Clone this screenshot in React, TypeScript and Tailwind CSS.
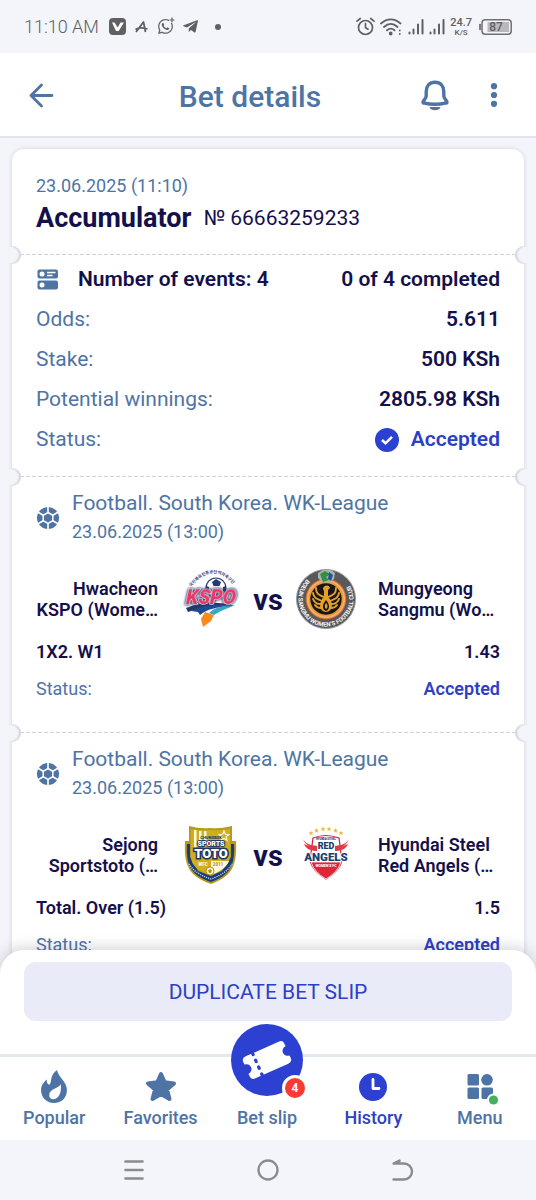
import type { ReactNode } from "react";
import { FaTelegramPlane, FaWhatsapp } from "react-icons/fa";

const spokes = [30, 90, 150, 210, 270, 330];

function SignalIcon() {
  return (
    <svg className="h-[18px] w-4" viewBox="0 0 16 18" fill="none" stroke="#606064" strokeWidth="2" strokeLinecap="round" aria-hidden="true">
      <path d="M1.5 15.500V14.500M5.500 15.500V11.500M10 15.500V6.500M14.500 15.500V2" />
    </svg>
  );
}

function StatusBar() {
  return (
    <div className="flex h-[53px] shrink-0 items-center justify-between bg-[#f4f5fa] px-6 text-[#606064]">
      <div className="flex items-center">
        <span className="mr-2.5 text-[18px] font-light">11:10 AM</span>
        <svg className="mr-[9px] h-[17px] w-[17px]" viewBox="0 0 17 17" aria-hidden="true">
          <rect width="17" height="17" rx="4" fill="#606064" />
          <path d="M3 4.500h2.500l3.200 5 2.800-5H15L9.700 13H7z" fill="#fff" />
        </svg>
        <svg className="mr-[9px] h-3.5 w-[13px]" viewBox="0 0 13 14" fill="none" stroke="#606064" strokeWidth="1.800" strokeLinejoin="round" aria-hidden="true">
          <path d="M1 12 8.500 2l2 10M.5 9.500C4 7 9 8 12.500 9" />
        </svg>
        <span className="relative mr-2 flex">
          <FaWhatsapp size={17} aria-hidden="true" />
          <svg className="absolute -right-px -top-px h-1.5 w-1.5" viewBox="0 0 6 6" aria-hidden="true">
            <rect width="6" height="6" fill="#f4f5fa" />
            <path d="M3 .5v5M.5 3h5" stroke="#606064" strokeWidth="1.200" />
          </svg>
        </span>
        <FaTelegramPlane size={17} aria-hidden="true" />
        <span className="ml-4 h-1.5 w-1.5 rounded-full bg-[#606064]" />
      </div>
      <div className="flex items-center">
        <svg className="mr-[5px] h-[19px] w-[19px]" viewBox="0 0 19 19" fill="none" stroke="#606064" strokeWidth="1.700" strokeLinecap="round" aria-hidden="true">
          <circle cx="9.500" cy="10.500" r="7" />
          <path d="M9.500 6.500v4.200l2.600 1.500M1 4.200 4.300 1.500M18 4.200l-3.300-2.700" />
        </svg>
        <svg className="mr-1.5 h-[19px] w-[22px]" viewBox="0 0 22 19" fill="none" stroke="#606064" strokeWidth="1.800" strokeLinecap="round" aria-hidden="true">
          <path d="M1 6.500C7 1 14.500 1 20.500 6.500M4 10C8.200 6 13.300 6 17.500 10M7 13.300c2.500-2.200 5-2.200 7.500 0" />
          <circle cx="10.700" cy="16.500" r="1" fill="#606064" />
          <path d="M19.800 13.500v.1M19.800 17v.1" />
        </svg>
        <SignalIcon />
        <span className="w-[5px]" />
        <SignalIcon />
        <span className="ml-[5px] flex flex-col items-center text-[11px] font-medium leading-[11px]">
          <span>24.7</span>
          <span className="text-[8px] leading-[9px]">K/S</span>
        </span>
        <svg className="ml-[7px] h-4 w-[33px]" viewBox="0 0 33 16" aria-hidden="true">
          <path d="M1 5.500v5" stroke="#606064" strokeWidth="1.600" strokeLinecap="round" />
          <rect x="3" y=".8" width="29.200" height="14.400" rx="3.200" fill="none" stroke="#707074" strokeWidth="1.500" />
          <path d="M8.500 3H30v10H8.500z" fill="#b9b9bd" />
          <text x="17" y="12.200" textAnchor="middle" fontSize="12" fontWeight="500" fill="#606064">87</text>
        </svg>
      </div>
    </div>
  );
}

function Header() {
  return (
    <header className="relative z-10 grid h-[85px] shrink-0 grid-cols-[84px_1fr_120px] items-center border-b-2 border-[#e0e4ed] bg-white px-[26px] text-[#4e74a5]">
      <button type="button" aria-label="Back" className="flex w-8">
        <svg className="h-8 w-8" viewBox="0 0 32 32" fill="none" stroke="currentColor" strokeWidth="2.800" strokeLinecap="round" strokeLinejoin="round">
          <path d="M26 16.500H5M15.500 6 5 16.500 15.500 27" />
        </svg>
      </button>
      <h1 className="pt-1 text-center text-[30px] font-medium">Bet details</h1>
      <div className="flex items-center justify-end gap-[27px]">
        <button type="button" aria-label="Notifications">
          <svg className="h-8 w-8" viewBox="0 0 32 32" fill="none">
            <path d="M16 3.200c-5.600 0-8.800 4-8.800 9.200v4.500c0 3-3.200 4.300-3.200 6 0 .8.700 1.200 1.700 1.200C9 25 12 25.300 16 25.300s7-.3 10.300-1.200c1 0 1.700-.4 1.700-1.200 0-1.700-3.200-3-3.200-6v-4.500c0-5.200-3.200-9.200-8.800-9.200z" stroke="currentColor" strokeWidth="3.400" />
            <path d="M10.500 28h11c-.7 2.200-2.800 3.300-5.500 3.300s-4.800-1.100-5.500-3.300z" fill="currentColor" />
          </svg>
        </button>
        <button type="button" aria-label="More options" className="flex w-8 justify-center">
          <svg className="h-6 w-2" viewBox="0 0 8 24" fill="currentColor">
            <circle cx="4" cy="3.200" r="3.100" />
            <circle cx="4" cy="12" r="3.100" />
            <circle cx="4" cy="20.800" r="3.100" />
          </svg>
        </button>
      </div>
    </header>
  );
}

function Perforation() {
  return (
    <>
      <div className="mx-2 h-px bg-[repeating-linear-gradient(90deg,#d2d3d8_0_4px,transparent_4px_6px)]" />
      <span className="absolute -left-[3px] -top-2 h-[18px] w-3 rounded-r-full bg-[#f4f5fa] shadow-[inset_-2px_0_2px_#d3d4da]" />
      <span className="absolute -right-[3px] -top-2 h-[18px] w-3 rounded-l-full bg-[#f4f5fa] shadow-[inset_2px_0_2px_#d3d4da]" />
    </>
  );
}

function BallIcon() {
  return (
    <svg className="h-6 w-6 shrink-0" viewBox="-12 -12 24 24" aria-hidden="true">
      <circle r="11" fill="#4e74a5" />
      <path d="M0-5.500 4.800-2.700V2.700L0 5.500-4.800 2.700V-2.700z" fill="#4e74a5" stroke="#fff" strokeWidth="1.500" />
      {spokes.map((a) => (
        <path key={a} transform={`rotate(${a})`} d="M5 0H12" stroke="#fff" strokeWidth="1.600" />
      ))}
    </svg>
  );
}

function KspoLogo() {
  return (
    <svg className="h-[60px] w-[60px]" viewBox="0 0 60 60" role="img" aria-label="Hwacheon KSPO">
      <defs>
        <path id="kspo-arc" d="M11 18Q34-10 56 19" />
      </defs>
      <text fontSize="4.200" fontWeight="700" fill="#33427c" className="font-[Noto_Sans_CJK_KR,sans-serif]">
        <textPath href="#kspo-arc">국민체육진흥공단여자축구단</textPath>
      </text>
      <circle cx="36" cy="19" r="10" fill="#fff" stroke="#26386f" strokeWidth="1.200" />
      <path d="M32 13l4-3 5 3-1.500 4h-6zM26 17l3 1v5h-3zM46 17l-3 1v5h3z" fill="#26386f" />
      <path d="M6 39C20 33 38 32 55 37 39 35 20 39 8 43z" fill="#26386f" />
      <path d="M11 42C24 36 37 35 51 37 37 38 27 40 20 46L18 43z" fill="#1f4c91" />
      <path d="M29 44C34 39 43 36 53 37L41 42 34 46z" fill="#36a8c8" />
      <path d="M25 43 34 46 31 52 23 58 21 50z" fill="#fa8a1c" />
      <g transform="translate(5 35) skewX(-12)">
        <text fontSize="19" fontWeight="900" fill="#ec3564" stroke="#fff" strokeWidth="1.200" paintOrder="stroke" className="font-[Roboto,sans-serif] [filter:drop-shadow(0_0_1px_#26386f)_drop-shadow(0_0_1px_#26386f)]">KSPO</text>
      </g>
    </svg>
  );
}

function SangmuLogo() {
  return (
    <svg className="h-[60px] w-[60px]" viewBox="0 0 60 60" role="img" aria-label="Mungyeong Sangmu">
      <defs>
        <path id="sangmu-ring" d="M14.200 7.500A27.500 27.500 0 1 0 45.800 7.500" />
        <radialGradient id="sangmu-glow">
          <stop offset=".72" stopColor="#ec7c28" />
          <stop offset=".88" stopColor="#f6b576" />
          <stop offset="1" stopColor="#893a22" />
        </radialGradient>
      </defs>
      <circle cx="30" cy="30" r="29.500" fill="#59595c" stroke="#9a9a9c" />
      <circle cx="30" cy="30" r="21" fill="url(#sangmu-glow)" />
      <circle cx="30" cy="30" r="17" fill="#e5a02b" />
      <circle cx="30" cy="30" r="15.700" fill="#191615" />
      <g fill="none" stroke="#e5a02b" strokeWidth="1.900" strokeLinecap="round">
        <path d="M20 19c0 7 4 7 8 9M17 24c1 6 5 6 9 8M17 30c2 5 5 5 8 5M19 36c2 3 4 3 6 3M40 19c0 7-4 7-8 9M43 24c-1 6-5 6-9 8M43 30c-2 5-5 5-8 5M41 36c-2 3-4 3-6 3" />
      </g>
      <path d="M27 20c0-4 6-5 7-1l-2 2v7c6 5 5 15-2 15s-8-10-2-15v-6z" fill="#e5a02b" />
      <path d="M30 31c-5 6-3 10 0 11 4-2 4-6 0-11z" fill="#191615" />
      <path d="M30 34c-2 3-1 5 0 6 2-1 2-4 0-6z" fill="#e5a02b" />
      <path d="M22 4 27 1h8l4 3-1 6-5 4-7-1-4-4z" fill="#a9b3af" />
      <path d="m24 5 5-3 5 3-4 3 3 3-6 2z" fill="#31913c" />
      <path d="m33 3 4 3-2 6-3-2z" fill="#285199" />
      <text fill="#f4f4f2" fontSize="6" fontWeight="700" className="font-[Roboto,sans-serif]">
        <textPath href="#sangmu-ring" startOffset="4">BOEUN SANGMU WOMEN’S FOOTBALL CLUB</textPath>
      </text>
    </svg>
  );
}

function TotoLogo() {
  return (
    <svg className="h-[60px] w-[60px]" viewBox="0 0 60 60" role="img" aria-label="Sejong Sportstoto">
      <path d="M9 1Q20 4 30 3 40 4 52 1V16H56C57 40 53 51 31 59 8 51 4 40 5 16H9z" fill="#b79a1c" />
      <path d="M7 19C6 41 11 50 31 57 50 50 55 41 54 19H51V32L42 46 31 51 18 46 10 32V19z" fill="#183b79" />
      <path d="M11 4Q22 6 31 5 39 6 50 4V31C49 41 42 46 31 50 18 46 11 41 11 31z" fill="#d0ae1c" />
      <path d="M14 5h2.500v18H14zm5 1h2.500v16H19zm5 0h2.500v14H24zM31 36H49C46 43 39 47 31 50z" fill="#fff8df" />
      <path d="m44 6 1.300 3.300 3.500.3-2.700 2.200.9 3.500-3-1.900-3 1.900.9-3.500-2.700-2.200 3.500-.3z" fill="none" stroke="#fff8df" strokeWidth="1.200" />
      <circle cx="30" cy="46" r="4" fill="#fff8df" stroke="#b98f11" />
      <path d="m30 44 2 1.500-1 2.500h-2l-1-2.500z" fill="#b98f11" />
      <path d="M9 39Q15 49 31 54 46 49 52 39" fill="none" stroke="#b9c8e6" strokeWidth="1.500" strokeDasharray="1.200 1" />
      <g textAnchor="middle" fontWeight="900" className="font-[Roboto,sans-serif]">
        <text x="31" y="13.500" fontSize="4" fill="#28436a">CHUNGBUK</text>
        <text x="31" y="21" fontSize="7" fill="#fff" stroke="#263d62" strokeWidth="2" paintOrder="stroke">SPORTS</text>
        <text x="31" y="33" fontSize="13" fill="#fff" stroke="#20365e" strokeWidth="3.200" paintOrder="stroke">TOTO</text>
        <text x="23" y="40.500" fontSize="4.500" fill="#fff8df">WFC</text>
        <text x="38" y="40.500" fontSize="4.500" fill="#bd9816">2011</text>
      </g>
    </svg>
  );
}

function AngelsLogo() {
  return (
    <svg className="h-[60px] w-[60px]" viewBox="0 0 60 60" role="img" aria-label="Hyundai Steel Red Angels">
      <g fill="#e8b84c">
        {[[15, 8], [20.5, 5.500], [27, 4], [33, 4], [39.500, 5.500], [45, 8]].map(([x, y]) => (
          <path key={x} transform={`translate(${x} ${y})`} d="m0-2.500.7 1.700 1.800.1-1.400 1.200.5 1.800L0 1.300l-1.600 1 .5-1.800L-2.500-.7l1.800-.1z" />
        ))}
      </g>
      <path d="M17 13Q30 8 43 13L46 36Q43 46 30 54 17 46 14 36z" fill="#fff" stroke="#cb2037" strokeWidth="1.200" />
      <path d="M15 37H45Q42 47 30 54 18 47 15 37z" fill="#df2538" stroke="#fff" strokeWidth=".8" />
      <path d="M7 14c3 5 7 6 14 7v5c-6 0-11-2-13-7l5 2c-3-2-5-4-6-7zM53 14c-3 5-7 6-14 7v5c6 0 11-2 13-7l-5 2c3-2 5-4 6-7z" fill="#e13a48" />
      <g textAnchor="middle" fontWeight="900" className="font-[Roboto,sans-serif]">
        <text x="30" y="15" fontSize="2.700" fill="#26446d">HYUNDAI STEEL</text>
        <text x="30" y="24" fontSize="9" fill="#183f70" stroke="#fff" strokeWidth="1.500" paintOrder="stroke">RED</text>
        <text x="30" y="35.500" fontSize="11.500" fill="#183f70" stroke="#fff" strokeWidth="1.800" paintOrder="stroke">ANGELS</text>
        <text x="30" y="42" fontSize="3.500" fill="#fff">WOMEN’S FC</text>
      </g>
    </svg>
  );
}

type EventProps = {
  home: [string, string];
  away: [string, string];
  homeLogo: ReactNode;
  awayLogo: ReactNode;
  market: string;
  odds: string;
};

function EventSection({ home, away, homeLogo, awayLogo, market, odds }: EventProps) {
  return (
    <section className="relative">
      <Perforation />
      <div className="px-6 pb-[26px] pt-3">
        <div className="flex items-center gap-3 text-[#4e74a5]">
          <BallIcon />
          <div>
            <h2 className="text-[21px] leading-7">Football. South Korea. WK-League</h2>
            <p className="text-[18px] leading-[30px]">23.06.2025 (13:00)</p>
          </div>
        </div>
        <div className="mt-[19px] grid h-[66px] grid-cols-[1fr_auto_1fr] items-center gap-[22px] text-[18px] font-semibold leading-[21px] text-[#14104c]">
          <p className="text-right">{home[0]}<br />{home[1]}</p>
          <div className="flex items-center">
            {homeLogo}
            <span className="w-14 pt-0.5 text-center text-[29px] font-bold leading-8">vs</span>
            {awayLogo}
          </div>
          <p>{away[0]}<br />{away[1]}</p>
        </div>
        <div className="flex h-[38px] items-center justify-between text-[18px] font-semibold text-[#14104c]">
          <span>{market}</span>
          <span>{odds}</span>
        </div>
        <div className="flex h-9 items-center justify-between text-[18px]">
          <span className="text-[#4e74a5]">Status:</span>
          <span className="font-semibold text-[#2d3fc4]">Accepted</span>
        </div>
      </div>
    </section>
  );
}

const summary = [
  ["Odds:", "5.611"],
  ["Stake:", "500 KSh"],
  ["Potential winnings:", "2805.98 KSh"],
];

function Slip() {
  return (
    <article className="mx-3 mt-[11px] rounded-xl bg-white shadow-[0_0_4px_#cfd1da]">
      <section className="px-6 pb-[18px] pt-6">
        <p className="text-[18px] leading-[26px] text-[#4e74a5]">23.06.2025 (11:10)</p>
        <div className="flex items-center gap-3 pt-px leading-9 text-[#14104c]">
          <strong className="text-[27px] font-bold">Accumulator</strong>
          <span className="text-[21px]">№ 66663259233</span>
        </div>
      </section>
      <section className="relative">
        <Perforation />
        <div className="px-6 pb-4 pt-[5px] text-[21px]">
          <div className="flex h-10 items-center font-semibold text-[#14104c]">
            <svg className="mr-[18px] h-6 w-6" viewBox="0 0 24 24" aria-hidden="true">
              <rect x="1.500" y="1.500" width="20.500" height="9" rx="2" fill="#4e74a5" />
              <rect x="1.500" y="12.500" width="20.500" height="9" rx="2" fill="#4e74a5" />
              <circle cx="6" cy="6" r="2.500" fill="#fff" />
              <circle cx="6" cy="17" r="2.500" fill="#fff" />
              <path d="M11 4.500h8.500M11 7.500h5.500" stroke="#fff" strokeWidth="1.300" />
            </svg>
            <span>Number of events: 4</span>
            <span className="ml-auto">0 of 4 completed</span>
          </div>
          {summary.map(([label, value]) => (
            <div key={label} className="flex h-10 items-center justify-between">
              <span className="text-[#4e74a5]">{label}</span>
              <span className="font-semibold text-[#14104c]">{value}</span>
            </div>
          ))}
          <div className="flex h-10 items-center">
            <span className="text-[#4e74a5]">Status:</span>
            <svg className="ml-auto mr-3 h-6 w-6" viewBox="0 0 24 24" aria-hidden="true">
              <circle cx="12" cy="12" r="12" fill="#2c40d2" />
              <path d="m7 12 3.500 3.300L17 8.800" fill="none" stroke="#fff" strokeWidth="2.600" />
            </svg>
            <span className="font-semibold text-[#2d3fc4]">Accepted</span>
          </div>
        </div>
      </section>
      <EventSection home={["Hwacheon", "KSPO (Wome…"]} away={["Mungyeong", "Sangmu (Wo…"]} homeLogo={<KspoLogo />} awayLogo={<SangmuLogo />} market="1X2. W1" odds="1.43" />
      <EventSection home={["Sejong", "Sportstoto (…"]} away={["Hyundai Steel", "Red Angels (…"]} homeLogo={<TotoLogo />} awayLogo={<AngelsLogo />} market="Total. Over (1.5)" odds="1.5" />
    </article>
  );
}

function NavItem({ label, active, children }: { label: string; active?: boolean; children: ReactNode }) {
  return (
    <a href="#" aria-current={active ? "page" : undefined} className={`flex flex-1 flex-col items-center ${active ? "text-[#2d3fc4]" : "text-[#4e74a5]"}`}>
      <span className="relative flex h-[46px] w-full items-end justify-center">{children}</span>
      <span className="mt-[3px] text-[18px] font-medium leading-6">{label}</span>
    </a>
  );
}

function BottomNav() {
  return (
    <nav className="mt-[33px] flex h-[86px] border-t-[3px] border-[#e3e8ec] pl-px pr-[3px]">
      <NavItem label="Popular">
        <svg className="h-[33px] w-[26px]" viewBox="0 0 76 97" fill="currentColor" fillRule="evenodd">
          <path d="M47 0C50 21 76 33 76 59c0 23-16 38-38 38S0 81 0 59c0-14 8-24 17-31-1 10 2 15 8 15 8-11 0-28 22-43zM58 42C50 56 24 55 24 74c0 8 5 12 12 12 15 0 25-18 22-44z" />
        </svg>
      </NavItem>
      <NavItem label="Favorites">
        <svg className="h-8 w-8" viewBox="0 0 32 32" fill="currentColor" stroke="currentColor" strokeWidth="4" strokeLinejoin="round">
          <path d="m16 3 3.700 8.300 9.300 1.100-7 6 2.500 9.600-8.500-5-8.500 5 2.500-9.600-7-6 9.300-1.100z" />
        </svg>
      </NavItem>
      <NavItem label="Bet slip">
        <span className="absolute -top-[33px] h-[72px] w-[72px] rounded-full bg-[#2c40d2]">
          <svg className="h-[72px] w-[72px]" viewBox="0 0 72 72" aria-hidden="true">
            <g transform="rotate(-24 36 36)">
              <path d="M18 24H54Q58.500 24 58.500 28V31A5 5 0 0 0 58.500 41V44Q58.500 48 54 48H18Q13.500 48 13.500 44V41A5 5 0 0 0 13.500 31V28Q13.500 24 18 24z" fill="#fff" />
              <path d="M25.500 24v24" stroke="#2c40d2" strokeWidth="3.200" strokeLinecap="round" strokeDasharray="1.500 6" />
            </g>
          </svg>
          <span className="absolute -right-[5px] bottom-[-5px] grid h-[26px] w-[26px] place-items-center rounded-full border-[3px] border-white bg-[#fa3b35] text-[12px] font-bold leading-none text-white">4</span>
        </span>
      </NavItem>
      <NavItem label="History" active>
        <svg className="mb-0.5 h-7 w-7" viewBox="0 0 28 28">
          <circle cx="14" cy="14" r="14" fill="#2c40d2" />
          <path d="M14 6.500V15.500H20" fill="none" stroke="#fff" strokeWidth="2.800" strokeLinecap="round" strokeLinejoin="round" />
        </svg>
      </NavItem>
      <NavItem label="Menu">
        <svg className="h-[34px] w-[34px] overflow-visible" viewBox="0 0 34 34" fill="currentColor">
          <rect x="4.500" y="5" width="11.500" height="11.500" rx="1.500" />
          <circle cx="24" cy="10.800" r="5.800" />
          <rect x="4.500" y="18.500" width="11.500" height="11.500" rx="1.500" />
          <rect x="18.500" y="18.500" width="11.500" height="11.500" rx="1.500" />
          <circle cx="30.500" cy="31" r="6.500" fill="#fff" />
          <circle cx="30.500" cy="31" r="4.600" fill="#45b05d" />
        </svg>
      </NavItem>
    </nav>
  );
}

function SystemNav() {
  return (
    <div className="flex h-[60px] items-center bg-[#f4f5fa] px-[67px] text-[#8b8b8f]">
      <button type="button" aria-label="Recent apps" className="flex flex-1 justify-center">
        <svg className="h-6 w-6" viewBox="0 0 24 24" stroke="currentColor" strokeWidth="2.600" strokeLinecap="round">
          <path d="M3.500 3.500h17M3.500 12h17M3.500 20.500h17" />
        </svg>
      </button>
      <button type="button" aria-label="Home" className="flex flex-1 justify-center">
        <svg className="h-6 w-6" viewBox="0 0 24 24" fill="none" stroke="currentColor" strokeWidth="2.300">
          <circle cx="12" cy="12" r="9.500" />
        </svg>
      </button>
      <button type="button" aria-label="Back to previous screen" className="flex flex-1 justify-center">
        <svg className="h-6 w-6" viewBox="0 0 24 24" fill="none" stroke="currentColor" strokeWidth="2.400" strokeLinecap="round" strokeLinejoin="round">
          <path d="M9.500 2.500 3.500 5.500H14a8 8 0 0 1 0 16H3.500" />
          <path d="M9.500 2.500 3.500 5.500h6z" fill="currentColor" strokeWidth="1" />
        </svg>
      </button>
    </div>
  );
}

export default function App() {
  return (
    <div className="flex h-screen flex-col bg-[#f4f5fa] font-[Roboto,sans-serif]">
      <StatusBar />
      <Header />
      <main className="min-h-0 flex-1 overflow-y-auto pb-8 [scrollbar-width:none]">
        <Slip />
      </main>
      <footer className="relative z-10 -mt-6 shrink-0 rounded-t-3xl bg-white pt-3 shadow-[0_-3px_14px_rgba(30,30,50,0.18)]">
        <div className="px-6">
          <button type="button" className="h-[59px] w-full rounded-xl bg-[#e9ebf9] pt-0.5 text-[21px] text-[#2d3fc4]">DUPLICATE BET SLIP</button>
        </div>
        <BottomNav />
        <SystemNav />
      </footer>
    </div>
  );
}
